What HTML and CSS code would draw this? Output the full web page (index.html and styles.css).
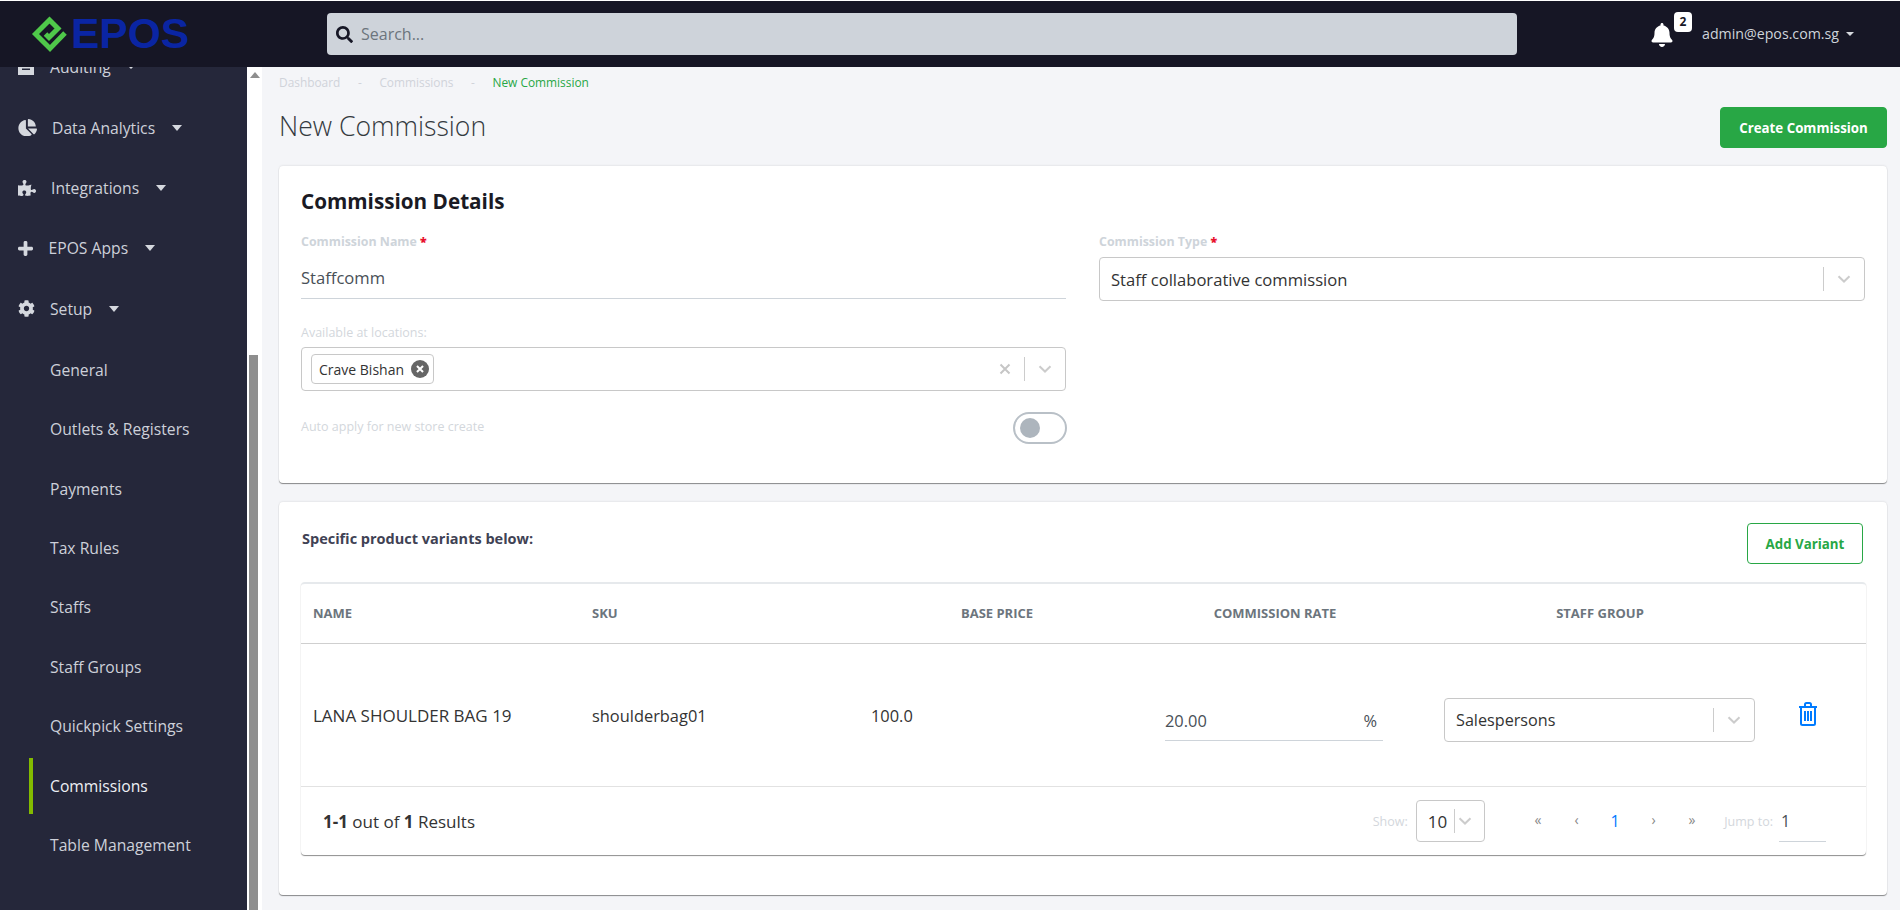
FILE: index.html
```html
<!DOCTYPE html>
<html lang="en">
<head>
<meta charset="utf-8">
<title>New Commission</title>
<link rel="stylesheet" href="styles.css">
</head>
<body>
<header class="topbar">
  <div class="brand">
    <svg class="brand-mark" viewBox="0 0 38 38"><path d="M34 18 19 33.500 4.500 19 18.500 5 27 13.500 18 22.500 14.500 19" fill="none" stroke="#4fc84a" stroke-width="5"/></svg>
    <span class="brand-name">EPOS</span>
  </div>
  <div class="search">
    <svg class="search-icon" viewBox="0 0 512 512"><path d="M505 442.7L405.3 343c-4.5-4.5-10.6-7-17-7H372c27.6-35.3 44-79.7 44-128C416 93.1 322.9 0 208 0S0 93.1 0 208s93.1 208 208 208c48.3 0 92.7-16.4 128-44v16.3c0 6.4 2.5 12.5 7 17l99.7 99.7c9.4 9.4 24.6 9.4 33.9 0l28.3-28.3c9.4-9.4 9.4-24.6.1-34zM208 336c-70.7 0-128-57.2-128-128 0-70.7 57.2-128 128-128 70.7 0 128 57.2 128 128 0 70.7-57.2 128-128 128z"/></svg>
    <span>Search...</span>
  </div>
  <div class="account">
    <div class="bell-wrap">
      <svg class="bell" viewBox="0 0 448 512"><path d="M224 512c35.32 0 63.97-28.65 63.97-64H160.03c0 35.35 28.65 64 63.97 64zm215.39-149.71c-19.32-20.76-55.47-51.99-55.47-154.29 0-77.7-54.48-139.9-127.94-155.16V32c0-17.67-14.32-32-31.98-32s-31.98 14.33-31.98 32v20.84C118.56 68.1 64.08 130.3 64.08 208c0 102.3-36.15 133.53-55.47 154.29-6 6.45-8.66 14.16-8.61 21.71.11 16.4 12.98 32 32.1 32h383.8c19.12 0 32-15.6 32.1-32 .05-7.55-2.61-15.27-8.61-21.71z"/></svg>
      <span class="badge">2</span>
    </div>
    <span class="email">admin@epos.com.sg</span>
    <span class="caret caret-small"></span>
  </div>
</header>

<div class="shell">
  <nav class="sidebar">
    <ul class="nav-list">
      <li class="nav-item nav-top">
        <svg class="nav-icon icon-audit" viewBox="0 0 16 16"><path d="M0 0h16v16H0z"/><path class="audit-line" d="M4 6h8v1.600H4zM4 9.500h8v1.600H4z"/></svg>
        <span>Auditing</span><span class="caret caret-audit"></span>
      </li>
      <li class="nav-item nav-top">
        <svg class="nav-icon icon-pie" viewBox="0 0 576 512"><path d="M558.3 288H304.3L473.5 457.2c6.5 6.5 17 7 23.7.7 41.4-39 69.9-91.6 78.2-150.6 1.4-10.1-6.8-19.3-17.1-19.3zM541.4 224C532.1 103.3 435.7 7 315.7-.2c-9-.5-16.6 7-16.6 16V224zM240 288V46.1c0-9.9-8.9-17.7-18.6-16.3C100 47.7 8 155.2 12 285c4.2 133.5 119.7 243 253 241 52.4-.8 100.8-17.7 140.5-45.9 8.2-5.8 8.8-17.7 1.7-24.8z"/></svg>
        <span>Data Analytics</span><span class="caret"></span>
      </li>
      <li class="nav-item nav-top">
        <svg class="nav-icon icon-puzzle" viewBox="0 0 576 512"><path d="M519.442 288.651c-41.519 0-59.5 31.593-82.058 31.593C377.409 320.244 432 144 432 144s-196.288 80-196.288-3.297c0-35.827 36.288-46.25 36.288-85.985C272 19.216 243.885 0 210.539 0c-34.654 0-66.366 18.891-66.366 56.346 0 41.364 31.711 59.277 31.711 81.75C175.885 207.719 0 166.758 0 166.758v333.237s178.635 41.047 178.635-28.662c0-22.473-40-40.107-40-81.471 0-37.456 29.25-56.346 63.577-56.346 33.673 0 61.788 19.216 61.788 54.717 0 39.735-36.288 50.158-36.288 85.985 0 60.803 129.675 25.73 181.23 25.73 0 0-34.725-120.101 25.827-120.101 35.962 0 46.423 36.152 86.308 36.152C556.712 416 576 387.99 576 354.443c0-34.199-18.962-65.792-56.558-65.792z"/></svg>
        <span>Integrations</span><span class="caret"></span>
      </li>
      <li class="nav-item nav-top">
        <svg class="nav-icon icon-plus" viewBox="0 0 16 16"><path d="M6 1.500C6 .7 6.700 0 7.500 0h1c.8 0 1.500.7 1.500 1.500V6h4.500c.8 0 1.500.7 1.500 1.500v1c0 .8-.7 1.500-1.500 1.500H10v4.500c0 .8-.7 1.500-1.500 1.500h-1C6.700 16 6 15.300 6 14.500V10H1.500C.7 10 0 9.300 0 8.500v-1C0 6.700.7 6 1.500 6H6z"/></svg>
        <span>EPOS Apps</span><span class="caret"></span>
      </li>
      <li class="nav-item nav-top">
        <svg class="nav-icon icon-cog" viewBox="0 0 512 512"><path d="M487.4 315.7l-42.6-24.6c4.3-23.2 4.3-47 0-70.2l42.6-24.6c4.9-2.8 7.1-8.6 5.5-14-11.1-35.6-30-67.8-54.7-94.6-3.8-4.1-10-5.1-14.8-2.3L380.800 110c-17.900-15.400-38.500-27.300-60.800-35.100V25.800c0-5.600-3.900-10.500-9.400-11.700-36.700-8.200-74.300-7.800-109.200 0-5.500 1.200-9.400 6.100-9.400 11.700V75c-22.200 7.900-42.800 19.800-60.800 35.100L88.700 85.500c-4.900-2.800-11-1.900-14.800 2.300-24.700 26.700-43.600 58.900-54.700 94.600-1.700 5.400.6 11.200 5.500 14L67.300 221c-4.300 23.200-4.300 47 0 70.200l-42.600 24.600c-4.900 2.800-7.100 8.600-5.500 14 11.100 35.600 30 67.800 54.700 94.600 3.800 4.100 10 5.100 14.800 2.300l42.600-24.600c17.900 15.400 38.500 27.300 60.800 35.100v49.200c0 5.600 3.900 10.500 9.400 11.700 36.700 8.200 74.300 7.800 109.200 0 5.500-1.200 9.400-6.100 9.400-11.700v-49.200c22.200-7.900 42.800-19.800 60.800-35.100l42.600 24.600c4.900 2.800 11 1.900 14.800-2.300 24.700-26.700 43.600-58.900 54.700-94.600 1.500-5.500-.7-11.300-5.600-14.100zM256 336c-44.100 0-80-35.900-80-80s35.900-80 80-80 80 35.900 80 80-35.900 80-80 80z"/></svg>
        <span>Setup</span><span class="caret"></span>
      </li>
      <li class="nav-item nav-sub">General</li>
      <li class="nav-item nav-sub">Outlets &amp; Registers</li>
      <li class="nav-item nav-sub">Payments</li>
      <li class="nav-item nav-sub">Tax Rules</li>
      <li class="nav-item nav-sub">Staffs</li>
      <li class="nav-item nav-sub">Staff Groups</li>
      <li class="nav-item nav-sub">Quickpick Settings</li>
      <li class="nav-item nav-sub is-active">Commissions</li>
      <li class="nav-item nav-sub">Table Management</li>
    </ul>
  </nav>
  <div class="scroll-track">
    <span class="scroll-arrow"></span>
    <span class="scroll-thumb"></span>
  </div>

  <main class="content">
    <div class="breadcrumb">
      <span>Dashboard</span><span class="sep">-</span><span>Commissions</span><span class="sep">-</span><span class="crumb-current">New Commission</span>
    </div>
    <div class="page-head">
      <h1>New Commission</h1>
      <button class="btn btn-solid">Create Commission</button>
    </div>

    <section class="card card-details">
      <h2>Commission Details</h2>
      <div class="form-grid">
        <div class="form-col">
          <label class="label-strong">Commission Name <b>*</b></label>
          <div class="line-input">Staffcomm</div>
          <label class="label-light label-loc">Available at locations:</label>
          <div class="select">
            <div class="select-value select-multi">
              <span class="chip">Crave Bishan
                <svg class="chip-x" viewBox="0 0 16 16"><circle cx="8" cy="8" r="8" fill="#666"/><path d="M5.300 5.300l5.400 5.400m0-5.400l-5.400 5.400" stroke="#fff" stroke-width="1.800"/></svg>
              </span>
            </div>
            <svg class="clear-x" viewBox="0 0 12 12"><path d="M1.500 1.500l9 9m0-9l-9 9" stroke="#c6c6c6" stroke-width="2"/></svg>
            <span class="select-sep"></span>
            <svg class="chev" viewBox="0 0 14 8"><path d="M1.500 1.200 7 6.500l5.500-5.300" fill="none" stroke="#cccccc" stroke-width="2"/></svg>
          </div>
          <div class="toggle-row">
            <span class="label-light">Auto apply for new store create</span>
            <span class="toggle"><span class="toggle-knob"></span></span>
          </div>
        </div>
        <div class="form-col">
          <label class="label-strong">Commission Type <b>*</b></label>
          <div class="select select-type">
            <div class="select-value">Staff collaborative commission</div>
            <span class="select-sep"></span>
            <svg class="chev" viewBox="0 0 14 8"><path d="M1.500 1.200 7 6.500l5.500-5.300" fill="none" stroke="#cccccc" stroke-width="2"/></svg>
          </div>
        </div>
      </div>
    </section>

    <section class="card card-variants">
      <div class="variants-head">
        <h3>Specific product variants below:</h3>
        <button class="btn btn-outline">Add Variant</button>
      </div>
      <div class="table">
        <div class="t-row t-head">
          <div>NAME</div>
          <div>SKU</div>
          <div class="center">BASE PRICE</div>
          <div class="center">COMMISSION RATE</div>
          <div class="center">STAFF GROUP</div>
          <div></div>
        </div>
        <div class="t-row t-body">
          <div class="cell-name">LANA SHOULDER BAG 19</div>
          <div>shoulderbag01</div>
          <div>100.0</div>
          <div class="cell-rate"><div class="rate-input"><span>20.00</span><span>%</span></div></div>
          <div class="cell-group">
            <div class="select">
              <div class="select-value">Salespersons</div>
              <span class="select-sep"></span>
              <svg class="chev" viewBox="0 0 14 8"><path d="M1.500 1.200 7 6.500l5.500-5.300" fill="none" stroke="#cccccc" stroke-width="2"/></svg>
            </div>
          </div>
          <div class="cell-trash">
            <svg class="trash" viewBox="0 0 20 24"><path d="M1 5h18M7 5V2.500C7 1.700 7.700 1 8.500 1h3c.8 0 1.500.7 1.500 1.500V5M3 5v16.500C3 22.300 3.700 23 4.500 23h11c.8 0 1.500-.7 1.500-1.500V5M7 9v10M10 9v10M13 9v10" fill="none" stroke="#007bff" stroke-width="2"/></svg>
          </div>
        </div>
        <div class="t-foot">
          <div class="results"><b>1-1</b> out of <b>1</b> Results</div>
          <div class="pager">
            <span class="pager-label">Show:</span>
            <div class="page-size"><span>10</span><span class="size-sep"></span>
              <svg class="chev chev-size" viewBox="0 0 14 8"><path d="M1.500 1.200 7 6.500l5.500-5.300" fill="none" stroke="#cccccc" stroke-width="2"/></svg>
            </div>
            <div class="pages">
              <span>«</span><span>‹</span><span class="page-on">1</span><span>›</span><span>»</span>
            </div>
            <span class="pager-label">Jump to:</span>
            <div class="jump">1</div>
          </div>
        </div>
      </div>
    </section>
  </main>
</div>
</body>
</html>
```

FILE: styles.css
```css
* { box-sizing: border-box; }
html, body { margin: 0; height: 910px; overflow: hidden; }
body {
  font-family: "Open Sans", "Noto Sans", sans-serif;
  font-size: 16px;
  color: #3a3a3a;
  background: #fff;
  padding-top: 1px;
  display: flex;
  flex-direction: column;
}
h1, h2, h3 { margin: 0; }
ul { margin: 0; padding: 0; list-style: none; }

/* top bar */
.topbar {
  height: 66px;
  flex: none;
  background: #161625;
  display: flex;
  align-items: center;
  position: relative;
  z-index: 2;
}
.brand { width: 327px; flex: none; padding-left: 31px; display: flex; align-items: center; }
.brand-mark { width: 38px; height: 38px; flex: none; margin-right: 2px; }
.brand-name {
  font-family: "Liberation Sans", Arial, sans-serif;
  font-weight: 700;
  font-size: 42.500px;
  line-height: 48px;
  color: #0a25a3;
}
.search {
  width: 1190px;
  height: 42px;
  flex: none;
  background: #ced3da;
  border-radius: 4px;
  display: flex;
  align-items: center;
  padding-left: 9px;
  color: #6c757d;
  font-size: 16px;
}
.search-icon { width: 17px; height: 17px; margin-right: 8px; fill: #161625; }
.account { flex: none; margin-left: 134px; display: flex; align-items: center; }
.bell-wrap { width: 51px; height: 44px; position: relative; }
.bell { width: 22px; height: 24px; fill: #fff; position: absolute; left: 0; top: 11px; }
.badge {
  position: absolute;
  left: 23px;
  top: 0;
  width: 18px;
  height: 20px;
  background: #fff;
  border-radius: 4px;
  color: #161625;
  font-size: 12px;
  font-weight: 700;
  line-height: 20px;
  text-align: center;
}
.email { color: #ced4da; font-size: 14.200px; line-height: 20px; }

.caret {
  display: inline-block;
  width: 0;
  height: 0;
  border-left: 5.500px solid transparent;
  border-right: 5.500px solid transparent;
  border-top: 6px solid #d5d8de;
  margin-left: 16.500px;
}
.caret-small { border-left-width: 4px; border-right-width: 4px; border-top-width: 4px; margin-left: 7px; }
.caret-audit { border-left-width: 4px; border-right-width: 4px; border-top-width: 4px; margin-left: 16px; }

/* shell */
.shell { flex: 1; min-height: 0; display: flex; }
.sidebar { width: 247px; flex: none; background: #25273a; overflow: hidden; }
.nav-list { margin-top: -30px; }
.nav-item { display: flex; align-items: center; color: #cdd0d9; font-size: 15.700px; white-space: nowrap; }
.nav-top { height: 60.400px; padding-left: 18px; }
.nav-top + .nav-sub { margin-top: 1px; }
.nav-sub { height: 59.450px; padding-left: 50px; position: relative; }
.nav-sub.is-active { color: #eef0f4; }
.nav-sub.is-active::before {
  content: "";
  position: absolute;
  left: 29px;
  top: 2px;
  width: 4px;
  height: 56px;
  background: #83bb00;
}
.nav-icon { flex: none; fill: #d5d8de; }
.icon-audit { width: 16px; height: 16px; margin-right: 16px; }
.audit-line { fill: #25273a; }
.icon-pie { width: 19px; height: 17px; margin-right: 15px; }
.icon-puzzle { width: 18px; height: 16px; margin-right: 15px; }
.icon-plus { width: 15px; height: 15px; margin-right: 15.500px; }
.icon-cog { width: 17px; height: 17px; margin-right: 15px; }

.scroll-track { width: 15px; flex: none; background: #fff; display: flex; flex-direction: column; align-items: center; }
.scroll-arrow {
  width: 0;
  height: 0;
  margin-top: 5px;
  border-left: 5px solid transparent;
  border-right: 5px solid transparent;
  border-bottom: 6px solid #8e8e8e;
}
.scroll-thumb { width: 9px; flex: 1; margin-top: 277px; background: #8e8e8e; margin-left: -3px; }

/* content */
.content { flex: 1; min-width: 0; background: #f4f5f8; padding: 0 13px 0 17px; overflow: hidden; }
.breadcrumb { height: 40px; display: flex; align-items: flex-start; padding-top: 6px; font-size: 11.900px; line-height: 18px; color: #d0d3da; }
.sep { width: 39px; text-align: center; color: #d0d3da; }
.crumb-current { color: #28a745; }
.page-head { height: 41px; display: flex; justify-content: space-between; align-items: center; margin-bottom: 18px; }
h1 { font-size: 26.600px; font-weight: 300; line-height: 36px; color: #343a40; margin-top: -4px; }
.btn {
  font-family: inherit;
  font-weight: 700;
  font-size: 13.300px;
  border-radius: 4px;
  height: 41px;
  cursor: pointer;
  padding: 0;
}
.btn-solid { width: 167px; background: #28a745; border: 1px solid #28a745; color: #fff; }
.btn-outline { width: 116px; background: #fff; border: 1px solid #28a745; color: #28a745; }

.card {
  background: #fff;
  border-radius: 4px;
  box-shadow: 0 -1px 2px rgba(0, 0, 0, .06), 0 1px 1px rgba(0, 0, 0, .45);
  padding: 0 21px 0 22px;
}
.card-details { height: 317px; margin-bottom: 19px; padding-top: 21px; }
h2 { font-size: 20.700px; font-weight: 700; line-height: 28px; color: #1a1a24; margin-bottom: 19px; }
.form-grid { display: grid; grid-template-columns: 765px 766px; column-gap: 33px; }
label { display: block; }
.label-strong { font-size: 12.400px; font-weight: 700; line-height: 16px; color: #ced4da; }
.label-strong b { color: #e8112d; }
.label-light { font-size: 12.500px; line-height: 16px; color: #d3d7dc; }
.label-loc { margin-top: 26px; }
.line-input { padding: 16px 0 8px; line-height: 24px; font-size: 16.600px; color: #495057; border-bottom: 1px solid #ced4da; }
.select {
  height: 44px;
  margin-top: 6px;
  background: #fff;
  border: 1px solid #c8c8c8;
  border-radius: 4px;
  display: flex;
  align-items: center;
  padding-right: 13px;
}
.select-type { margin-top: 7px; }
.select-value { flex: 1; min-width: 0; padding-left: 11px; font-size: 16.600px; color: #333; white-space: nowrap; }
.select-multi { padding-left: 9px; }
.select-sep { width: 1px; height: 24px; background: #cccccc; flex: none; margin: 0 13px 0 13px; }
.chev { width: 14px; height: 8px; flex: none; }
.chip {
  display: inline-flex;
  align-items: center;
  height: 30px;
  width: 123px;
  border: 1px solid #c8c8c8;
  border-radius: 4px;
  padding-left: 7px;
  font-size: 14px;
  color: #333;
  justify-content: space-between;
  padding-right: 4px;
}
.chip-x { width: 18px; height: 18px; }
.clear-x { width: 12px; height: 12px; flex: none; }
.toggle-row { display: flex; justify-content: space-between; align-items: center; margin-top: 21px; height: 32px; }
.toggle-row .label-light { margin-top: -3px; }
.toggle {
  width: 54px;
  height: 32px;
  border: 2px solid #b9c0c7;
  border-radius: 16px;
  padding: 4px 5px;
  background: #fff;
  margin-right: -1px;
}
.toggle-knob { display: block; width: 20px; height: 20px; border-radius: 50%; background: #adb5bd; }

.card-variants { height: 393px; padding-top: 21px; }
.variants-head { height: 41px; display: flex; justify-content: space-between; align-items: flex-start; margin-bottom: 18px; padding: 0 3px 0 1px; }
h3 { font-size: 14.500px; font-weight: 700; line-height: 32px; color: #3f4254; }
.table {
  border-top: 2px solid #e6e9ec;
  border-radius: 4px;
  box-shadow: 0 1px 1px rgba(0, 0, 0, .45);
}
.t-row { display: grid; grid-template-columns: 279px 279px 276px 280px 370px 80px; align-items: center; }
.t-head {
  height: 60px;
  border-bottom: 1px solid #cfcfcf;
  font-size: 13px;
  font-weight: 700;
  color: #6c757d;
  padding-bottom: 2px;
}
.t-row > div { padding-left: 12px; }
.t-row > .center { padding-left: 0; text-align: center; }
.t-body { height: 143px; border-bottom: 1px solid #e2e2e2; font-size: 16.400px; color: #333; }
.t-row > .cell-name { font-size: 17px; white-space: nowrap; }
.t-row > .cell-rate { padding: 0 32px 0 30px; }
.rate-input {
  display: flex;
  justify-content: space-between;
  height: 41px;
  padding: 9px 6px 0 0;
  border-bottom: 1px solid #ced4da;
  color: #495057;
  line-height: 24px;
  margin-top: 10px;
}
.t-row > .cell-group { padding: 0 30px 0 29px; }
.cell-group .select { margin-top: 9px; }
.cell-group .select-value { font-size: 16.200px; }
.t-row > .cell-trash { padding-left: 12px; display: flex; margin-top: -2px; }
.trash { width: 22px; height: 24px; }
.t-foot { height: 68px; display: flex; justify-content: space-between; align-items: center; padding-left: 22px; }
.results { font-size: 17px; color: #333; }
.pager { display: flex; align-items: center; margin-right: 40px; }
.pager-label { font-size: 12.500px; color: #d3d7dc; }
.page-size {
  width: 69px;
  height: 42px;
  margin-left: 8px;
  border: 1px solid #c8c8c8;
  border-radius: 4px;
  display: flex;
  align-items: center;
  padding-left: 11px;
  font-size: 17px;
  color: #333;
}
.size-sep { width: 1px; height: 24px; background: #ccc; margin: 0 3px 0 7px; }
.chev-size { width: 14px; }
.pages { display: flex; margin: 0 13px 0 34px; color: #888; font-size: 14px; }
.pages span { width: 38.500px; text-align: center; }
.pages .page-on { color: #007bff; font-size: 16px; }
.jump {
  width: 47px;
  height: 42px;
  margin-left: 6px;
  padding: 9px 0 0 2px;
  border-bottom: 1px solid #ced4da;
  color: #495057;
  line-height: 24px;
}
```
